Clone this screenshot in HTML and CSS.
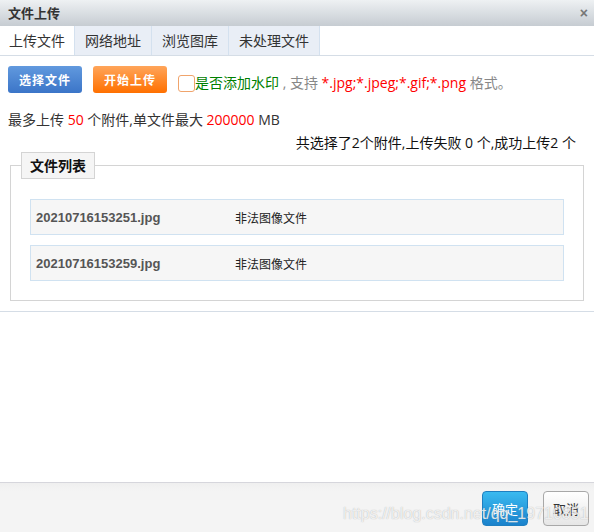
FILE: index.html
```html
<!DOCTYPE html>
<html lang="zh-CN">
<head>
<meta charset="utf-8">
<title>文件上传</title>
<link rel="stylesheet" href="styles.css">
</head>
<body>
<div class="dialog">
  <div class="titlebar">
    <span class="title">文件上传</span>
    <span class="close">×</span>
  </div>
  <div class="tabs">
    <div class="tab active">上传文件</div>
    <div class="tab">网络地址</div>
    <div class="tab">浏览图库</div>
    <div class="tab">未处理文件</div>
  </div>
  <div class="content">
    <div class="toolbar">
      <button class="btn btn-blue">选择文件</button>
      <button class="btn btn-orange">开始上传</button>
      <span class="check"></span>
      <span class="opt"><span class="green">是否添加水印</span><span class="gray"> , 支持 </span><span class="red">*.jpg;*.jpeg;*.gif;*.png</span><span class="gray"> 格式。</span></span>
    </div>
    <div class="limit">最多上传 <span class="red">50</span> 个附件,单文件最大 <span class="red">200000</span> MB</div>
    <div class="summary">共选择了2个附件,上传失败 0 个,成功上传2 个</div>
    <fieldset class="filebox">
      <legend class="legend">文件列表</legend>
      <div class="rows">
        <div class="row"><span class="fname">20210716153251.jpg</span><span class="status">非法图像文件</span></div>
        <div class="row"><span class="fname">20210716153259.jpg</span><span class="status">非法图像文件</span></div>
      </div>
    </fieldset>
  </div>
  <div class="spacer"></div>
  <div class="footer">
    <button class="fbtn ok">确定</button>
    <button class="fbtn cancel">取消</button>
    <span class="watermark">https://blog.csdn.net/qq_19710851</span>
  </div>
</div>
</body>
</html>
```
FILE: styles.css
```css
* { box-sizing: border-box; }
html, body { margin: 0; padding: 0; background: #fff; }
body {
  font-family: "Open Sans", "Noto Sans CJK SC", sans-serif;
  font-size: 14px;
  color: #333;
}
.dialog {
  position: relative;
  width: 594px;
  height: 532px;
  display: flex;
  flex-direction: column;
  background: #fff;
}
.titlebar {
  height: 26px;
  flex: none;
  display: flex;
  align-items: center;
  justify-content: space-between;
  padding: 0 8px;
  background: linear-gradient(#eef1f3, #c6ccd2);
}
.title { font-family: "Noto Sans CJK SC", sans-serif; font-weight: bold; font-size: 13px; color: #333; line-height: 26px; }
.close { font-family: "Liberation Sans", sans-serif; font-size: 14px; font-weight: bold; color: #777; line-height: 26px; margin-right: -2px; }
.tabs {
  height: 30px;
  flex: none;
  display: flex;
  border-bottom: 1px solid #d5dde6;
}
.tab {
  height: 29px;
  line-height: 29px;
  padding: 0 10px;
  background: #e9eef6;
  border-right: 1px solid #d4e1ef;
  color: #333;
  font-family: "Noto Sans CJK SC", sans-serif;
  font-size: 14px;
}
.tab.active { background: #fff; padding: 0 9px; }
.content {
  flex: none;
  border-bottom: 1px solid #d5dde6;
  padding: 10px 0 10px;
}
.toolbar {
  display: flex;
  align-items: flex-end;
  padding-left: 8px;
  height: 27px;
}
.btn {
  height: 27px;
  width: 74px;
  border: none;
  border-radius: 3px;
  color: #fff;
  font-family: "Noto Sans CJK SC", sans-serif;
  font-weight: bold;
  font-size: 12px;
  letter-spacing: 1px;
  padding: 0;
  margin-right: 11px;
}
.btn-blue { background: linear-gradient(#6199de, #3b75c8); }
.btn-orange { background: linear-gradient(#ffa55a, #ff7000); }
.check {
  width: 17px;
  height: 17px;
  border: 1px solid #f0a46c;
  border-radius: 3px;
  background: #fff;
  margin-bottom: 1px;
}
.opt { line-height: 20px; white-space: nowrap; }
.green { color: #008000; }
.gray { color: #888; }
.red { color: #f00; }
.limit {
  margin-top: 18px;
  padding-left: 8px;
  line-height: 18px;
  color: #333;
}
.summary {
  margin-top: 5px;
  line-height: 18px;
  text-align: right;
  padding-right: 18px;
  color: #111;
}
.filebox {
  margin: 0 10px;
  border: 1px solid #d4d4d4;
  padding: 0 10px 19px;
  min-width: 0;
}
.legend {
  padding: 0 8px;
  border: 1px solid #d4d4d4;
  background: #f5f5f5;
  font-family: "Noto Sans CJK SC", sans-serif;
  font-weight: bold;
  font-size: 14px;
  line-height: 25px;
  color: #111;
}
.rows {
  padding: 20px 9px 0;
  display: flex;
  flex-direction: column;
  gap: 10px;
}
.row {
  height: 36px;
  display: flex;
  align-items: center;
  background: #f6f6f6;
  border: 1px solid #d0e2f1;
  padding-left: 5px;
}
.fname {
  width: 199px;
  font-family: "Liberation Sans", sans-serif;
  font-weight: bold;
  font-size: 13px;
  color: #555;
}
.status { font-family: "Noto Sans CJK SC", sans-serif; font-size: 12px; color: #222; }
.spacer { flex: 1; }
.footer {
  position: relative;
  height: 50px;
  flex: none;
  border-top: 1px solid #d6d6dc;
  background: linear-gradient(#efefef, #f4f4f4 8px, #f4f4f4);
  display: flex;
  justify-content: flex-end;
  align-items: flex-start;
  padding: 8px 5px 0 0;
  gap: 15px;
}
.fbtn {
  width: 46px;
  height: 35px;
  border-radius: 4px;
  font-family: "Noto Sans CJK SC", sans-serif;
  font-size: 13px;
  padding: 0;
}
.ok {
  border: 1px solid #1f7fc0;
  background: linear-gradient(#3abaf0, #1a82cc);
  color: #fff;
}
.cancel {
  border: 1px solid #a8a8a8;
  background: linear-gradient(#ffffff, #e6e6e6);
  color: #333;
}
.watermark {
  position: absolute;
  left: 343px;
  top: 21px;
  font-family: "Liberation Sans", sans-serif;
  font-size: 16px;
  line-height: 20px;
  color: rgba(255, 255, 255, 0.8);
  text-shadow: 0 0 1px rgba(120, 120, 120, 0.6);
  pointer-events: none;
  white-space: nowrap;
}
```
